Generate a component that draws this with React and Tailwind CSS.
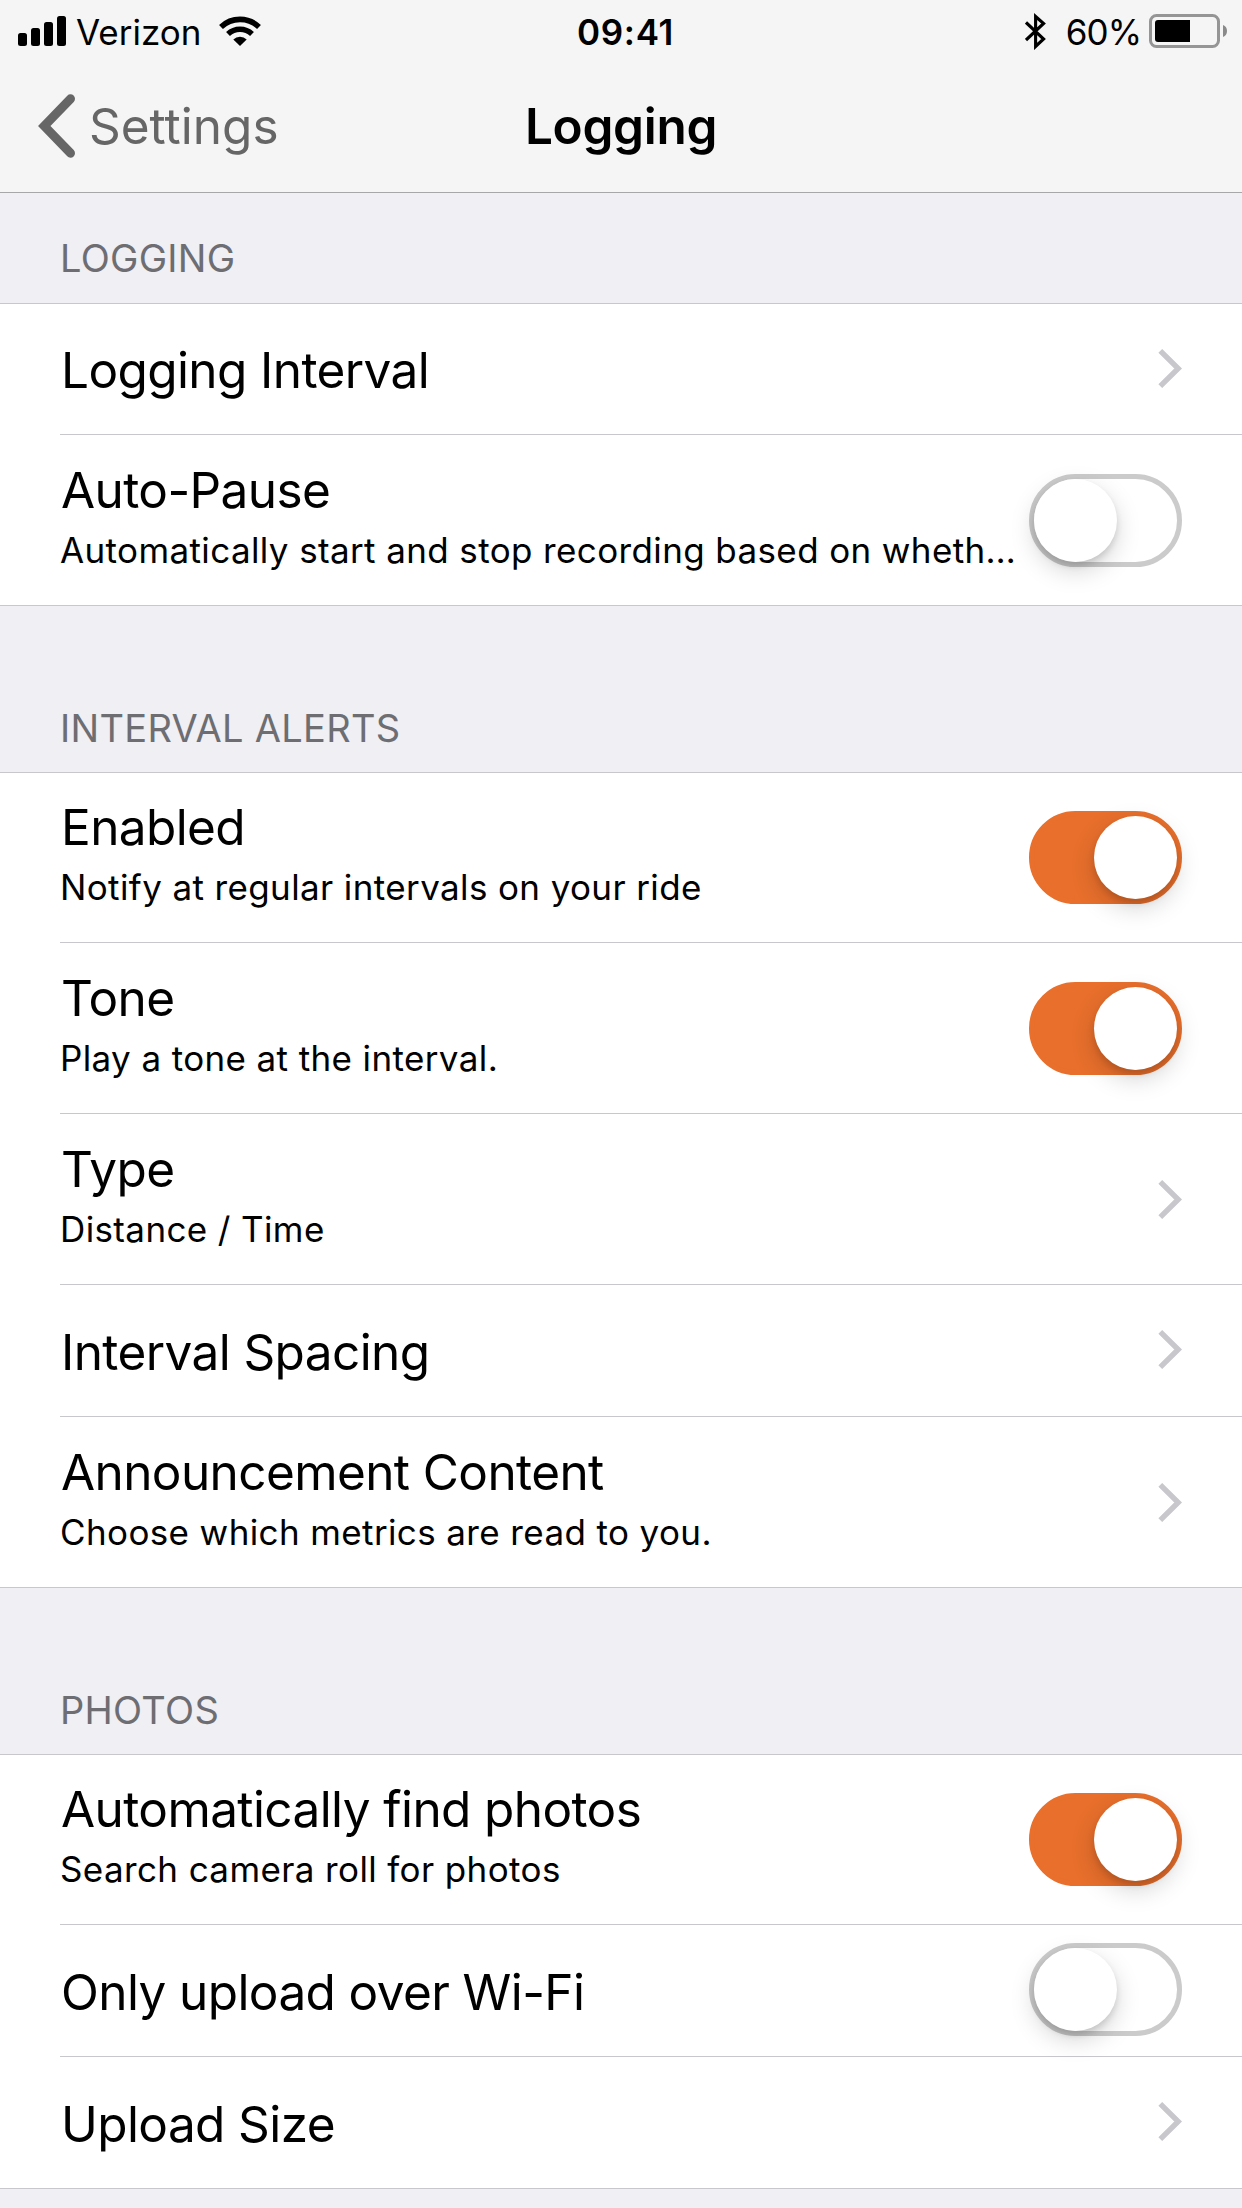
import { useState } from 'react';

const sections = [
    {
        title: 'Logging',
        rows: [
            { label: 'Logging Interval' },
            {
                label: 'Auto-Pause',
                detail: 'Automatically start and stop recording based on wheth…',
                toggle: true,
                on: false
            }
        ]
    },
    {
        title: 'Interval Alerts',
        rows: [
            { label: 'Enabled', detail: 'Notify at regular intervals on your ride', toggle: true, on: true },
            { label: 'Tone', detail: 'Play a tone at the interval.', toggle: true, on: true },
            { label: 'Type', detail: 'Distance / Time' },
            { label: 'Interval Spacing' },
            { label: 'Announcement Content', detail: 'Choose which metrics are read to you.' }
        ]
    },
    {
        title: 'Photos',
        rows: [
            { label: 'Automatically find photos', detail: 'Search camera roll for photos', toggle: true, on: true },
            { label: 'Only upload over Wi-Fi', toggle: true, on: false },
            { label: 'Upload Size' }
        ]
    }
];

const StatusBar = () => (
    <div className="grid h-[60px] grid-cols-3 items-center text-[35px] leading-[60px]">
        <div className="flex items-center pl-[18px]">
            <svg width="48" height="30" viewBox="0 0 48 30">
                <rect x="0" y="17" width="9" height="13" rx="2.5" />
                <rect x="13" y="12" width="9" height="18" rx="2.5" />
                <rect x="26" y="6" width="9" height="24" rx="2.5" />
                <rect x="39" y="0" width="9" height="30" rx="2.5" />
            </svg>
            <span className="ml-2.5 pt-0.5">Verizon</span>
            <svg width="42" height="30" viewBox="0 0 42 30" className="ml-[18px]">
                <path d="M2 11 A27.5 27.5 0 0 1 40 11" fill="none" stroke="black" strokeWidth="5.6" />
                <path d="M9 18 A17.5 17.5 0 0 1 33 18" fill="none" stroke="black" strokeWidth="5.6" />
                <path d="M14.3 23.5 A9.6 9.6 0 0 1 27.7 23.5 L21 30 Z" />
            </svg>
        </div>
        <div className="pt-0.5 pl-[9px] text-center font-semibold tracking-[0.7px]">09:41</div>
        <div className="flex items-center justify-end pr-[15px]">
            <svg width="21" height="37" viewBox="0 0 21 37" fill="none" stroke="black" strokeWidth="3.1">
                <path d="M1 9.5 L18.6 26 L10.6 33.5 V3.5 L18.6 10.5 L1 27" />
            </svg>
            <span className="ml-5 pt-0.5 tracking-[-1px]">60%</span>
            <svg width="78" height="34" viewBox="0 0 78 34" className="ml-2">
                <rect x="1.5" y="1.5" width="68" height="31" rx="6" fill="none" stroke="#959595" strokeWidth="3" />
                <path d="M9 6 H41 V28 H9 A3 3 0 0 1 6 25 V9 A3 3 0 0 1 9 6 Z" />
                <path d="M74 11 A6.5 6.5 0 0 1 74 23 Z" fill="#8a8a8a" />
            </svg>
        </div>
    </div>
);

const NavBar = () => (
    <div className="grid h-[132px] grid-cols-3 items-center text-[49.5px] leading-[60px]">
        <button className="flex items-center pl-[38px] text-[#666]">
            <svg width="38" height="64" viewBox="0 0 38 64" fill="none" stroke="currentColor" strokeWidth="9">
                <path d="M32.5 4.8 L6.3 32 L32.5 59.2" strokeLinecap="round" />
            </svg>
            <span className="ml-[13px]">Settings</span>
        </button>
        <h1 className="text-center font-semibold tracking-[-0.3px]">Logging</h1>
    </div>
);

const Toggle = ({ on, onChange }) => (
    <button
        role="switch"
        aria-checked={on}
        onClick={onChange}
        className={`flex h-[93px] w-[153px] shrink-0 items-center rounded-full border-[5px] ${on
            ? 'justify-end border-[#e86f2c] bg-[#e86f2c]'
            : 'justify-start border-[#cbcbcb] bg-white'
            }`}
    >
        <span className="size-[83px] rounded-full bg-white shadow-[0_9px_24px_rgba(0,0,0,0.17),0_4px_6px_rgba(0,0,0,0.12)]" />
    </button>
);

const Chevron = () => (
    <svg width="24" height="39" viewBox="0 0 24 39" fill="none" stroke="#c7c7cc" strokeWidth="5.4" className="shrink-0">
        <path d="M2.3 1.9 L20.2 19.5 L2.3 37.1" />
    </svg>
);

const rowHeight = (row, first) => {
    if (row.detail) return first ? 'h-[170px]' : 'h-[171px]';
    return first ? 'h-[131px]' : 'h-[132px]';
};

const textOffset = (row, first) => {
    if (row.detail) return first ? 'pb-0.5' : '';
    return first ? 'pt-px' : 'pt-[3px]';
};

const Row = ({ row, first, last }) => {
    const [on, setOn] = useState(row.on);

    return (
        <div className={`pl-[60px] ${rowHeight(row, first)} ${last ? 'border-b border-[#c8c7cc]' : ''}`}>
            <div
                className={`flex h-full items-center justify-between pr-[60px] ${last ? '' : 'border-b border-[#c8c7cc]'}`}
            >
                <div className={`leading-[60px] whitespace-nowrap ${textOffset(row, first)}`}>
                    <div className="pl-px text-[49.5px] tracking-[-0.6px]">{row.label}</div>
                    {row.detail && <div className="text-[35px] tracking-[0.38px]">{row.detail}</div>}
                </div>
                <div className={row.detail ? '' : 'pb-0.5'}>
                    {row.toggle ? <Toggle on={on} onChange={() => setOn(!on)} /> : <Chevron />}
                </div>
            </div>
        </div>
    );
};

const App = () => (
    <div className="min-h-[2208px] w-[1242px] overflow-hidden bg-[#efeff4] font-['Inter',sans-serif] text-black">
        <header className="border-b border-[#a7a7aa] bg-[#f5f5f5]">
            <StatusBar />
            <NavBar />
        </header>

        {sections.map((section, i) => (
            <section key={section.title}>
                <h2
                    className={`flex items-end pl-[60px] text-[38px] leading-[60px] tracking-[0.3px] text-[#6d6d72] uppercase ${i === 0
                        ? 'h-[110px] pb-[15px]'
                        : 'h-[166px] pb-[14px]'
                        }`}
                >
                    {section.title}
                </h2>
                <div className="border-t border-[#c8c7cc] bg-white">
                    {section.rows.map((row, j) => (
                        <Row key={row.label} row={row} first={j === 0} last={j === section.rows.length - 1} />
                    ))}
                </div>
            </section>
        ))}
    </div>
);

export default App;
